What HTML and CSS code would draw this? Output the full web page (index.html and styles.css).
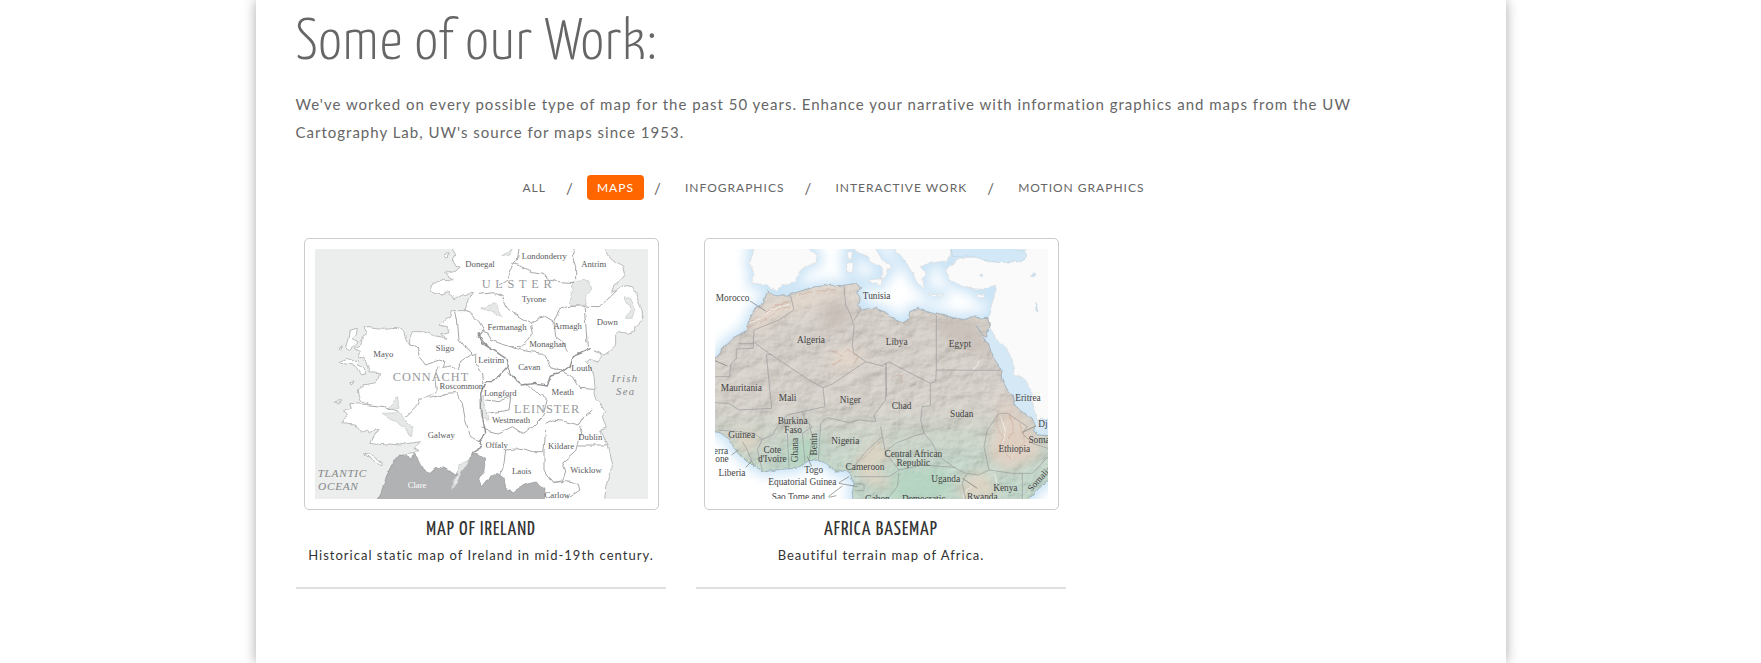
FILE: index.html
```
<!DOCTYPE html>
<html lang="en">
<head>
<meta charset="utf-8">
<meta name="viewport" content="width=device-width, initial-scale=1">
<title>Some of our Work</title>
<link rel="stylesheet" href="styles.css">
</head>
<body>
<main class="page">
  <h1 class="heading">Some of our Work:</h1>
  <p class="intro">We've worked on every possible type of map for the past 50 years. Enhance your narrative with information graphics and maps from the UW Cartography Lab, UW's source for maps since 1953.</p>
  <nav aria-label="Work categories">
    <ul class="filters">
      <li><a href="#all">All</a></li>
      <li><a href="#maps" class="active" aria-current="true">Maps</a></li>
      <li><a href="#infographics">Infographics</a></li>
      <li><a href="#interactive">Interactive Work</a></li>
      <li><a href="#motion">Motion Graphics</a></li>
    </ul>
  </nav>
  <section class="grid">
    <article class="card">
      <a class="frame" href="#ireland" aria-label="Map of Ireland">
        <svg class="map ireland" viewBox="48 57 999 750">
          <defs>
            <filter id="rough" x="-5%" y="-5%" width="110%" height="110%">
              <feTurbulence type="fractalNoise" baseFrequency="0.035" numOctaves="2" seed="4"/>
              <feDisplacementMap in="SourceGraphic" scale="14" xChannelSelector="R" yChannelSelector="G"/>
            </filter>
          </defs>
          <rect x="48" y="57" width="999" height="750" fill="#eceeed"/>
          <g filter="url(#rough)" stroke-linejoin="round">
            <path class="land" d="M460 30V57L470 75 460 90 472 110 485 110 468 125 440 130 460 150 430 148 400 160 395 175 405 190 430 195 445 185 460 200 465 210 490 195 520 190 505 215 495 242 460 242 455 262 430 275 420 285 445 290 450 305 425 312 445 325 400 315 370 305 340 305 332 325 332 345 320 325 315 308 295 292 250 295 210 290 195 292 205 310 190 320 185 345 165 355 185 365 175 380 195 385 205 405 210 425 245 428 240 445 230 458 190 465 175 480 180 505 185 515 215 525 155 520 160 535 130 540 150 555 125 575 145 583 170 585 185 610 205 600 215 610 228 598 240 595 222 625 215 640 235 643 250 640 300 645 365 635 345 655 360 665 330 670 295 675 262 740 280 742 250 785 225 840H915L920 770 930 740 940 710 935 690 925 650 918 630 905 600 922 595 910 560 920 545 905 520 890 508 885 490 888 470 885 440 880 415 860 395 870 388 895 395 908 380 885 362 915 375 930 365 950 345 950 315 960 305 985 310 1010 303 1010 290 1030 270 1030 240 1018 215 1010 185 1000 170 975 165 955 180 938 187 945 165 965 150 978 135 972 112 960 105 945 95 925 75 920 57V30Z"/>
            <path class="land" d="M150 300 175 295 172 315 160 325 180 335 165 350 150 362 140 350 148 325ZM120 395 140 385 160 392 180 390 178 408 195 415 200 432 185 435 165 405 125 400ZM190 668 215 675 250 698 248 705 220 690ZM152 455 168 453 160 462ZM105 515 125 512 120 522ZM437 70 450 68 448 80 440 80ZM120 350 130 345 125 358Z"/>
            <path class="dark" d="M228 840 262 740 275 715 300 672 325 675 340 688 345 670 360 690 378 725 390 730 410 712 440 715 470 735 485 710 510 690 520 668 545 675 560 685 555 720 540 745 550 770 570 745 595 730 615 745 620 775 640 785 680 765 710 755 735 775 732 840Z"/>
            <path class="lake" d="M295 500 300 535 270 535ZM250 550 300 548 315 570 340 595 338 620 325 600 290 575ZM540 510 552 495 570 570 548 560ZM820 155 870 150 875 180 860 190 865 225 820 228 810 215 822 180ZM545 235 590 220 612 265 590 250ZM480 700 510 695 490 725 478 745 458 780 460 750 478 735ZM605 80 640 57 630 75ZM978 200 995 205 1008 235 1000 262 980 262 995 240Z"/>
            <path class="county" d="M495 242 515 250 540 275 555 300 540 320 555 340 570 350M470 245 475 270 480 330 495 350 515 360 520 375M332 345 355 350 360 380 380 405 420 390 435 395 430 415 460 410 475 420 480 400 515 375 530 370 530 400 550 430 555 460M420 410 410 440 415 480 395 500 360 508 350 530 330 550 315 565M215 525 260 530 300 545M395 505 440 490 470 488 490 520 500 575 515 620 540 635M660 57 655 90 640 110 625 150 600 165M640 100 670 110 700 125 740 130 745 150 780 155 825 158M825 57 820 80 830 110 830 150M540 190 580 185 610 200 625 235 660 260 695 280 720 265 740 260 765 275 780 240 805 230 840 228M695 285 700 310 685 330 665 350 630 350 575 330 565 305 545 300M765 275 770 320 790 335 805 365M855 230 860 280 865 350M840 228 900 230 935 200 955 180M630 350 690 365 735 370 755 410 790 420M680 460 700 480 745 505 740 530 730 560 700 590 670 610 640 590 600 610 560 600 545 590M740 580 760 570 800 575 840 585 855 560 880 540M790 425 820 440 840 475 885 478M620 425 650 445 670 465M560 510 600 515 635 500 630 540 565 550M600 740 615 700 620 660 670 655 700 665 735 665 740 600M735 665 735 720 760 760 790 758 800 720 790 700 830 665 835 640 850 590M835 645 925 645M760 760 800 755 835 760 840 780 800 807"/>
            <path class="province" d="M540 310 550 340 590 365 620 385 628 410 600 440 575 455 560 455M628 415 645 445 670 465 710 460 745 465 755 435 790 425 810 410 820 380 845 370 875 355M560 460 545 490 550 560 560 610 540 635 550 650 520 668"/>
          </g>
          <g class="labels">
            <text x="543" y="111">Donegal</text><text x="736" y="87">Londonderry</text><text x="884" y="112">Antrim</text>
            <text x="705" y="217">Tyrone</text><text x="624" y="299">Fermanagh</text><text x="806" y="296">Armagh</text><text x="925" y="284">Down</text>
            <text x="746" y="350">Monaghan</text><text x="577" y="398">Leitrim</text><text x="691" y="421">Cavan</text><text x="848" y="424">Louth</text>
            <text x="438" y="364">Sligo</text><text x="253" y="382">Mayo</text><text x="487" y="477">Roscommon</text><text x="604" y="499">Longford</text>
            <text x="791" y="494">Meath</text><text x="636" y="578">Westmeath</text><text x="427" y="625">Galway</text><text x="593" y="653">Offaly</text>
            <text x="786" y="657">Kildare</text><text x="874" y="629">Dublin</text><text x="668" y="733">Laois</text><text x="861" y="729">Wicklow</text><text x="775" y="804">Carlow</text>
            <text x="354" y="774" class="light">Clare</text>
          </g>
          <g class="regions">
            <text x="660" y="175" class="wide">ULSTER</text><text x="396" y="452">CONNACHT</text><text x="744" y="548">LEINSTER</text>
          </g>
          <g class="water">
            <text x="978" y="457">Irish</text><text x="980" y="494">Sea</text>
            <text x="130" y="742" class="ocean">TLANTIC</text><text x="118" y="781" class="ocean">OCEAN</text>
          </g>
        </svg>
      </a>
      <h2 class="title">Map of Ireland</h2>
      <p class="caption">Historical static map of Ireland in mid-19th century.</p>
    </article>
    <article class="card">
      <a class="frame" href="#africa" aria-label="Africa Basemap">
        <svg class="map africa" viewBox="48 57 999 750">
          <defs>
            <linearGradient id="terrain" x1="0" y1="0" x2="0" y2="1">
              <stop offset="0" stop-color="#d5cbbf"/><stop offset=".2" stop-color="#c9bfb6"/><stop offset=".52" stop-color="#cbc1b8"/><stop offset=".66" stop-color="#bcc5b5"/><stop offset=".82" stop-color="#accab6"/><stop offset="1" stop-color="#a8cbb6"/>
            </linearGradient>
            <path id="africaCoast" d="M205 183 215 187 230 197 270 198 285 190 320 178 350 170 390 165 430 167 470 160 485 170 475 190 488 210 475 225 490 240 510 235 530 235 560 247 575 260 610 277 628 268 632 245 655 235 685 245 710 252 760 262 790 268 820 260 850 264 866 262 872 290 862 322 850 315 833 288 845 310 865 340 885 385 905 415 908 445 925 480 940 495 945 525 965 540 1000 565 1010 590 1003 600 1015 615 1080 618V740L1047 752 1020 775 990 807V840H465L460 790 465 760 455 735 440 722 410 727 390 705 360 690 330 692 290 715 245 718 195 725 160 705 130 680 105 655 90 630 70 612 20 590V410L48 390 70 355 100 325 145 300 148 275 165 240 195 215Z"/>
            <path id="eurasia" d="M162 30V70L152 100 165 130 160 160 205 165 215 178 235 182 250 165 290 155 300 130 320 110 355 95 355 75 325 57V30ZM450 30 465 62 500 75 520 100 545 110 552 130 545 150 560 140 562 120 580 112 550 90 530 57V30ZM588 30 590 62 620 95 640 130 655 160 677 175 670 145 682 135 665 110 690 100 745 92 755 75 755 30ZM508 150 555 145 545 165 520 160ZM445 65 460 65 458 88 445 88ZM442 98 463 98 460 128 445 125ZM1080 30H985L975 85 910 97 850 92 830 80 780 85 755 105 740 120 752 150 780 165 810 175 850 178 890 166 885 200 875 235 868 262 872 290 890 330 920 350 940 390 945 430 980 450 995 480 1005 540 1015 570 1080 560ZM690 190 730 192 728 198 692 196ZM835 195 860 190 850 203 838 203Z"/>
            <clipPath id="landClip"><use href="#africaCoast"/></clipPath>
            <filter id="glow" x="-20%" y="-20%" width="140%" height="140%"><feGaussianBlur stdDeviation="17"/></filter>
            <filter id="soft" x="-50%" y="-50%" width="200%" height="200%"><feGaussianBlur stdDeviation="18"/></filter>
            <filter id="jag" x="-5%" y="-5%" width="110%" height="110%">
              <feTurbulence type="fractalNoise" baseFrequency="0.05" numOctaves="2" seed="9"/>
              <feDisplacementMap in="SourceGraphic" scale="12" xChannelSelector="R" yChannelSelector="G"/>
            </filter>
            <filter id="relief" x="0" y="0" width="100%" height="100%">
              <feTurbulence type="fractalNoise" baseFrequency="0.016 0.022" numOctaves="5" seed="12" result="n"/>
              <feColorMatrix in="n" values="0 0 0 0 0 0 0 0 0 0 0 0 0 0 0 1 0 0 0 0"/>
              <feDiffuseLighting surfaceScale="9" lighting-color="#ffffff"><feDistantLight azimuth="225" elevation="50"/></feDiffuseLighting>
            </filter>
          </defs>
          <rect x="48" y="57" width="999" height="750" fill="#fff"/>
          <g filter="url(#glow)" fill="#cbe4f6" stroke="#cbe4f6" stroke-width="30"><use href="#africaCoast"/><use href="#eurasia"/></g>
          <path d="M835 290 872 290 945 390 1000 480 1047 570V625L1000 590 930 500Z" fill="#d4e8f6"/>
          <g filter="url(#jag)">
            <use href="#eurasia" fill="#fafafa" stroke="#dcdcdc" stroke-width="2"/>
            <path class="sea" d="M755 40 760 80 800 78 830 82 860 92 900 97 960 95 985 80 978 65 930 50ZM842 132 850 130 848 138ZM995 138 1010 130 1008 142ZM1008 215 1016 240 1012 242Z"/>
            <use href="#africaCoast" fill="url(#terrain)"/>
          </g>
          <g clip-path="url(#landClip)">
            <g filter="url(#soft)">
              <path fill="#e0d1c3" d="M150 290 200 230 280 200 430 170 470 175 350 215 250 250 180 300ZM390 380 440 350 500 380 460 410 400 410Z"/>
              <path fill="#d9c8b9" d="M905 500 960 550 1020 620 1020 680 930 720 880 700 870 640 900 580Z"/>
              <path fill="#d6ccb9" d="M465 700 540 620 580 690 520 710 600 780 500 760ZM100 600 180 610 170 660 130 670ZM790 740 860 720 900 807H780Z"/>
              <path fill="#c0b6ae" d="M370 210 460 220 450 290 370 300ZM700 265 830 270 880 380 740 330Z"/>
              <path fill="#a9ceb7" d="M270 630 370 620 360 700 250 720ZM600 720 760 720 740 807H560Z"/>
            </g>
            <rect class="shade" x="48" y="57" width="999" height="750" filter="url(#relief)"/>
            <g filter="url(#jag)">
              <path class="ridge" d="M148 296 175 275 205 268 235 238 270 230M155 274 190 258 215 232 265 215M300 195 350 183 405 180M390 360 430 375 445 360 480 380 465 400M400 402 430 390M900 540 890 590 912 620 905 650 935 690M930 550 945 590 930 630M960 580 980 630 955 660M470 695 500 680 525 650 545 635M578 440 605 435 608 460"/>
              <path class="shine" d="M150 280 185 262 215 237 270 223M905 560 920 605 910 640M790 800 815 765M835 290 850 320M888 720 896 760M822 420 840 395M355 660 353 690"/>
            </g>
          </g>
          <g filter="url(#jag)"><use href="#africaCoast" fill="none" stroke="#8fa3b2" stroke-width="2"/></g>
          <path class="border" d="M275 198 285 240 240 270 165 300 163 335 210 370 330 450 372 473 400 462 500 395 465 370 460 345 465 290 455 255 440 225 435 170M163 335 163 355 112 357 112 385 95 405 92 440H48M118 341 163 341M220 373 202 373 218 535 120 540 90 520 48 518M372 473 378 530 310 545 265 555 235 590 220 615 190 628 165 610 118 605 60 600M500 395 550 408 562 400 560 510 525 555 530 575 480 570 450 578 385 563 365 580 362 630 358 690M485 240 465 270M555 402 570 396 694 460 694 527 670 530 665 570 675 610 640 620 590 640 565 660M560 410 563 500M712 255 712 420 905 421M712 420 710 455 694 460M675 610 700 640 720 680 770 715 800 730 840 735 870 720 855 650 865 600 900 550 925 550 985 590M870 720 940 730 1000 730 1047 680M545 590 550 620 500 665 465 710M550 620 560 670 600 720 670 705 770 712M465 740H570L600 720M465 762H495V782H468M310 545 320 570 340 590 310 610 318 695M265 610 270 718M190 628 175 660 190 722M130 635 145 660 165 710M330 580 340 620 330 690M970 729V807M800 735 790 760 800 807M600 730 595 770 565 807M985 590 970 610 1000 640 1047 655"/>
          <path class="leader" d="M153 213 200 243M48 392 85 408M98 675 117 660M140 712 158 694M325 680 338 710M420 758 450 740M420 760 475 770M388 800 430 768M390 802 412 797M790 745 835 775M970 607 1010 588"/>
          <g class="places">
            <text x="101" y="214">Morocco</text><text x="533" y="206">Tunisia</text><text x="336" y="338">Algeria</text><text x="593" y="344">Libya</text><text x="783" y="351">Egypt</text>
            <text x="127" y="484">Mauritania</text><text x="266" y="513">Mali</text><text x="454" y="518">Niger</text><text x="608" y="536">Chad</text><text x="788" y="562">Sudan</text><text x="987" y="514">Eritrea</text>
            <text x="281" y="583">Burkina</text><text x="282" y="609">Faso</text><text x="128" y="624">Guinea</text><text x="220" y="669">Cote</text><text x="220" y="695">d'Ivoire</text><text x="439" y="641">Nigeria</text>
            <text x="643" y="682">Central African</text><text x="643" y="708">Republic</text><text x="498" y="720">Cameroon</text><text x="344" y="730">Togo</text><text x="99" y="738">Liberia</text>
            <text x="310" y="766">Equatorial Guinea</text><text x="298" y="809">Sao Tome and</text><text x="740" y="755">Uganda</text><text x="919" y="783">Kenya</text><text x="850" y="809">Rwanda</text><text x="946" y="665">Ethiopia</text>
            <text x="66" y="671">erra</text><text x="69" y="697">one</text><text x="1020" y="640">Soma</text><text x="1032" y="592">Dj</text><text x="674" y="816">Democratic</text><text x="535" y="816">Gabon</text>
            <text transform="translate(298 660) rotate(-90)">Ghana</text><text transform="translate(355 643) rotate(-90)">Benin</text><text transform="translate(1028 752) rotate(-48)">Somalia</text>
          </g>
        </svg>
      </a>
      <h2 class="title">Africa Basemap</h2>
      <p class="caption">Beautiful terrain map of Africa.</p>
    </article>
  </section>
</main>
</body>
</html>
```
FILE: styles.css
```
* { box-sizing: border-box; }

body {
  margin: 0;
  background: #fff;
  color: #666;
  font-family: Lato, "Open Sans", sans-serif;
  font-size: 15px;
  letter-spacing: 1px;
}

.page {
  max-width: 1250px;
  min-height: 100vh;
  margin: 0 auto;
  padding: 12px 40px 72px;
  background: #fff;
  box-shadow: 0 0 12px #aaa;
}

.heading {
  margin: 0;
  font-family: "Yanone Kaffeesatz", "Liberation Sans Narrow", "Roboto Condensed", Lato, sans-serif;
  font-size: 59px;
  font-weight: 300;
  line-height: 64px;
  letter-spacing: 1px;
}

.intro {
  margin: 14px 0 0;
  max-width: 1080px;
  line-height: 28px;
}

.filters {
  display: flex;
  flex-wrap: wrap;
  justify-content: center;
  margin: 29px 0 0;
  padding: 0 94px 0 0;
  list-style: none;
}

.filters li {
  display: flex;
  align-items: center;
}

.filters li + li::before {
  content: "/";
  width: 6px;
  margin: 0 15px 0 10px;
  letter-spacing: 0;
}

.filters a {
  padding: 0 10px;
  border-radius: 4px;
  color: #666;
  font-size: 12px;
  line-height: 25px;
  text-decoration: none;
  text-transform: uppercase;
}

.filters .active {
  background: #f60;
  color: #fff;
}

.grid {
  display: grid;
  grid-template-columns: repeat(3, 1fr);
  gap: 30px;
  margin-top: 38px;
}

.card {
  padding: 0 7px 21px 8px;
  border-bottom: 2px solid #e0e0e0;
  color: #333;
  text-align: center;
}

.frame {
  display: block;
  padding: 10px;
  border: 1px solid #ccc;
  border-radius: 5px;
}

.map {
  display: block;
  width: 100%;
  height: auto;
  overflow: hidden;
  letter-spacing: 0;
  text-anchor: middle;
}

.title {
  margin: 8px 0 0;
  font-family: "Yanone Kaffeesatz", "Liberation Sans Narrow", "Roboto Condensed", Lato, sans-serif;
  font-size: 20px;
  font-weight: 400;
  line-height: 24px;
  letter-spacing: 1px;
  text-transform: uppercase;
}

.caption {
  margin: 2px 0 0;
  font-size: 13px;
  line-height: 22px;
}

.ireland text { font-family: "Liberation Serif", serif; }
.ireland .land { fill: #fff; stroke: #b9babb; stroke-width: 3; }
.ireland .dark { fill: #b1b2b4; stroke: #929496; stroke-width: 2; }
.ireland .lake { fill: #e6e8e7; stroke: #c3c5c5; stroke-width: 2; }
.ireland .county { fill: none; stroke: #a6a7a8; stroke-width: 3; }
.ireland .province { fill: none; stroke: #909192; stroke-width: 4; }
.labels { fill: #58595b; font-size: 26px; }
.labels .light { fill: #fff; }
.regions { fill: #98999b; font-size: 37px; letter-spacing: 3px; }
.regions .wide { letter-spacing: 14px; }
.water { fill: #858789; font-size: 32px; font-style: italic; letter-spacing: 4px; }
.water .ocean { font-size: 34px; letter-spacing: 2px; }

.africa .sea { fill: #d3e8f7; stroke: #bdd0dc; stroke-width: 2; }
.africa .shade { mix-blend-mode: soft-light; opacity: 0.4; }
.africa .ridge { fill: none; stroke: #c9a08c; stroke-width: 3; opacity: 0.5; }
.africa .shine { fill: none; stroke: #f4f1ec; stroke-width: 3; opacity: 0.8; }
.africa .border { fill: none; stroke: #98989c; stroke-width: 2; }
.africa .leader { fill: none; stroke: #777; stroke-width: 2; }
.places { fill: #444; font-family: "Liberation Serif", serif; font-size: 28px; }
```
